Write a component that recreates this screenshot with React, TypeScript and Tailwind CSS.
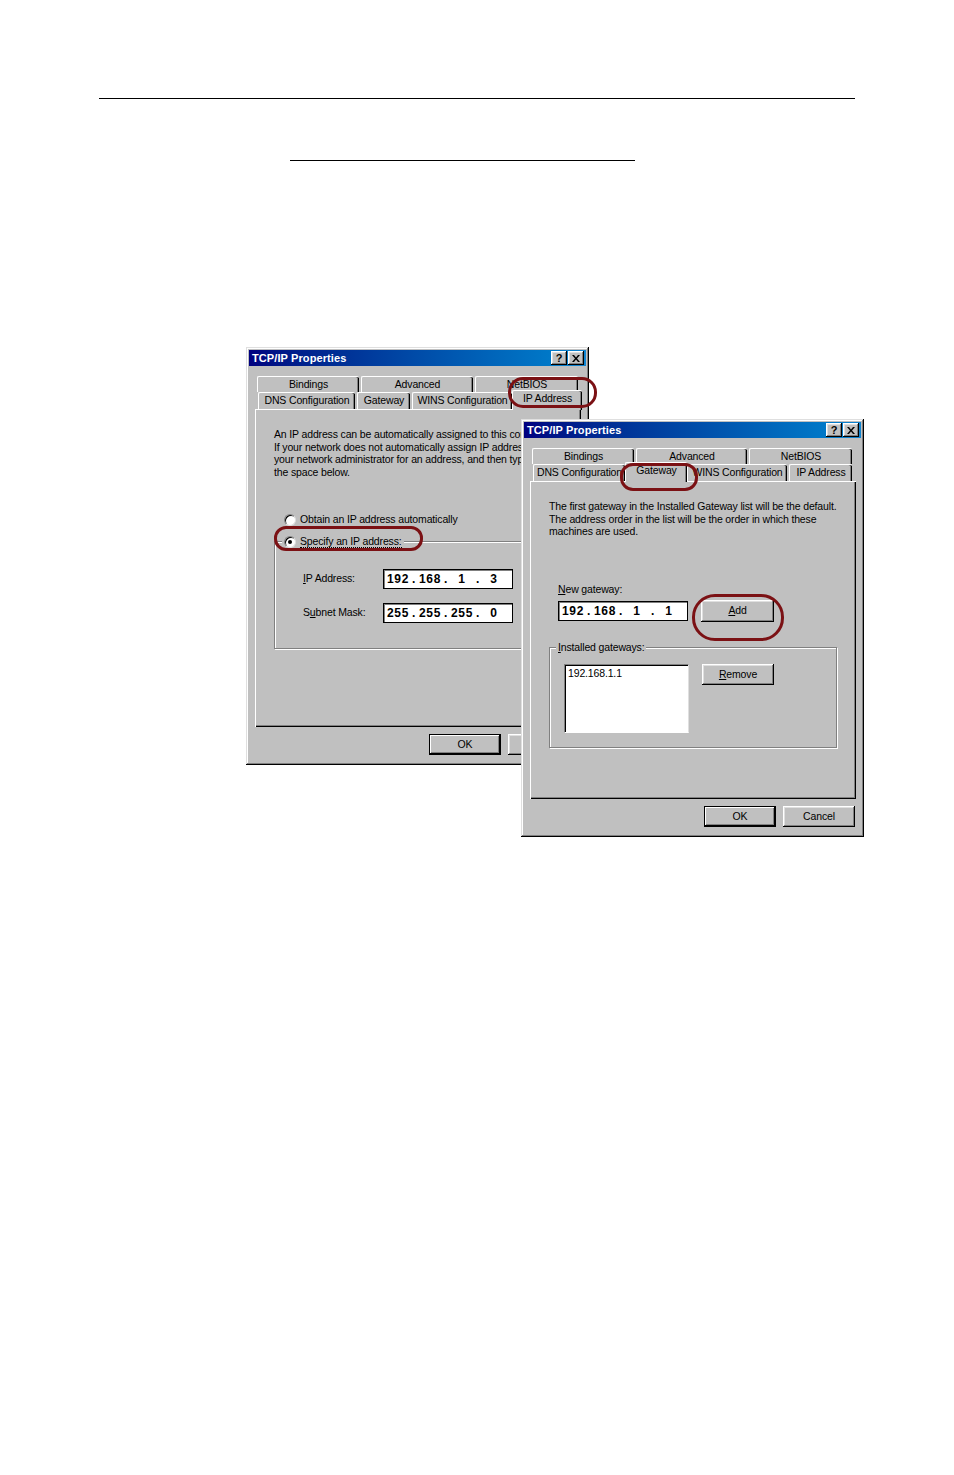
import React from 'react';

// win98 bevels
const raised = 'bg-[#c0c0c0] shadow-[inset_-1px_-1px_#000,inset_1px_1px_#fff,inset_-2px_-2px_#808080,inset_2px_2px_#dfdfdf]';
const winFrame = 'bg-[#c0c0c0] shadow-[inset_-1px_-1px_#000,inset_1px_1px_#dfdfdf,inset_-2px_-2px_#808080,inset_2px_2px_#fff]';
const ui = "font-['Liberation_Sans',Arial,sans-serif] text-[10.5px] tracking-[-0.15px] text-black";

interface TabDef {
  label: string;
  w: number;
  selected?: boolean;
}

const Tab: React.FC<TabDef & { h: string }> = ({ label, w, selected, h }) => {
  if (selected) {
    return (
      <div
        style={{ width: w + 4 }}
        className="relative z-10 -mx-[2px] -mb-px h-[20px] shrink-0 rounded-t-[2px] border-t border-l border-white bg-[#c0c0c0] pb-[3px] shadow-[inset_-1px_0_#000,inset_-2px_0_#808080] flex items-center justify-center whitespace-nowrap overflow-hidden"
      >
        {label}
      </div>
    );
  }
  return (
    <div
      style={{ width: w }}
      className={`${h} shrink-0 rounded-t-[2px] border-t border-l border-white bg-[#c0c0c0] shadow-[inset_-1px_0_#000,inset_-2px_0_#808080] flex items-center justify-center whitespace-nowrap overflow-hidden`}
    >
      {label}
    </div>
  );
};

const TitleBar = () => (
  <div className="h-[16px] flex items-center justify-between pl-[3px] pr-[2px] bg-linear-to-r from-[#000080] to-[#1084d0]">
    <span className="font-['Liberation_Sans',Arial,sans-serif] text-[11px] font-bold text-white tracking-[0.1px]">TCP/IP Properties</span>
    <div className="flex gap-[1px]">
      <div className={`${raised} w-[16px] h-[14px] flex items-center justify-center font-['Liberation_Sans',Arial,sans-serif] text-[11px] font-bold leading-none`}>?</div>
      <div className={`${raised} w-[16px] h-[14px] flex items-center justify-center`}>
        <svg width="8" height="7" viewBox="0 0 8 7">
          <path d="M0 0h2l2 2.5L6 0h2L5 3.5 8 7H6L4 4.5 2 7H0l3-3.5z" fill="#000" />
        </svg>
      </div>
    </div>
  </div>
);

const Button: React.FC<{ children: React.ReactNode; w: number; h?: number; isDefault?: boolean }> = ({ children, w, h = 21, isDefault }) => (
  <div
    style={{ width: w, height: h }}
    className={
      isDefault
        ? 'border border-black bg-[#c0c0c0] shadow-[inset_-1px_-1px_#000,inset_1px_1px_#fff,inset_-2px_-2px_#808080] flex items-center justify-center shrink-0'
        : `${raised} flex items-center justify-center shrink-0`
    }
  >
    {children}
  </div>
);

const IpField: React.FC<{ parts: string[] }> = ({ parts }) => (
  <div className="w-[130px] h-[20px] bg-white border border-black shadow-[inset_1px_1px_#808080] flex items-center pl-[3px] font-['Liberation_Sans',Arial,sans-serif] text-[12px] font-bold tracking-[0.6px]">
    {parts.map((p, i) => (
      <React.Fragment key={i}>
        <span className="w-[22px] text-center">{p}</span>
        {i < parts.length - 1 && <span className="w-[10px] text-center">.</span>}
      </React.Fragment>
    ))}
  </div>
);

const Radio: React.FC<{ checked?: boolean }> = ({ checked }) => (
  <span className="w-[12px] h-[12px] rounded-full bg-white border border-t-[#808080] border-l-[#808080] border-r-[#dfdfdf] border-b-[#dfdfdf] shadow-[inset_1px_1px_#000] flex items-center justify-center shrink-0">
    {checked && <span className="w-[4px] h-[4px] rounded-full bg-black" />}
  </span>
);

const Window: React.FC<{ className: string; row1: TabDef[]; row2: TabDef[]; children: React.ReactNode }> = ({ className, row1, row2, children }) => (
  <div className={`absolute w-[343px] h-[418px] p-[3px] ${winFrame} ${ui} ${className}`}>
    <TitleBar />
    <div className="mt-[10px] ml-[8px] flex gap-[2px]">
      {row1.map((t) => (
        <Tab key={t.label} {...t} h="h-[16px]" />
      ))}
    </div>
    <div className="ml-[9px] h-[17px] flex items-end gap-[2px]">
      {row2.map((t) => (
        <Tab key={t.label} {...t} h="h-[17px]" />
      ))}
    </div>
    <div className="ml-[6px] w-[326px] h-[318px] bg-[#c0c0c0] border-t border-l border-white shadow-[inset_-1px_-1px_#000,inset_-2px_-2px_#808080] overflow-hidden">
      {children}
    </div>
    <div className="mt-[7px] pr-[6px] flex justify-end gap-[7px]">
      <Button w={72} isDefault>OK</Button>
      <Button w={72}>Cancel</Button>
    </div>
  </div>
);

const Ring: React.FC<{ className: string }> = ({ className }) => (
  <div className={`absolute z-30 border-[3px] border-[#7b1114] ${className}`} />
);

export default function App() {
  return (
    <div className="relative w-[954px] h-[1475px] bg-white overflow-hidden">
      <div className="pt-[98px]">
        <div className="ml-[99px] w-[756px] h-px bg-black" />
        <div className="mt-[61px] ml-[290px] w-[345px] h-px bg-black" />
      </div>

      {/* back dialog: IP Address tab */}
      <Window
        className="left-[246px] top-[347px] z-10"
        row1={[
          { label: 'Bindings', w: 102 },
          { label: 'Advanced', w: 112 },
          { label: 'NetBIOS', w: 103 },
        ]}
        row2={[
          { label: 'DNS Configuration', w: 97 },
          { label: 'Gateway', w: 53 },
          { label: 'WINS Configuration', w: 100 },
          { label: 'IP Address', w: 66, selected: true },
        ]}
      >
        <div className="pl-[18px] pt-[18px]">
          <p className="leading-[12.7px] whitespace-nowrap">
            An IP address can be automatically assigned to this computer.
            <br />
            If your network does not automatically assign IP addresses, ask
            <br />
            your network administrator for an address, and then type it in
            <br />
            the space below.
          </p>
          <div className="mt-[34px] ml-[10px] h-[14px] flex items-center gap-[4px]">
            <Radio />
            <span>Obtain an IP address automatically</span>
          </div>
          <fieldset className="mt-[8px] w-[290px] border border-[#808080] shadow-[1px_1px_#fff,inset_1px_1px_#fff]">
            <legend className="ml-[7px] px-[2px] bg-[#c0c0c0]">
              <span className="h-[14px] flex items-center gap-[4px]">
                <Radio checked />
                <span className="border-b border-dotted border-black leading-[11px]">Specify an IP address:</span>
              </span>
            </legend>
            <div className="pl-[28px] pt-[20px] pb-[25px] flex flex-col gap-[14px]">
              <div className="flex items-center">
                <span className="w-[80px]">
                  <span className="underline">I</span>P Address:
                </span>
                <IpField parts={['192', '168', '1', '3']} />
              </div>
              <div className="flex items-center">
                <span className="w-[80px]">
                  S<span className="underline">u</span>bnet Mask:
                </span>
                <IpField parts={['255', '255', '255', '0']} />
              </div>
            </div>
          </fieldset>
        </div>
      </Window>

      {/* front dialog: Gateway tab */}
      <Window
        className="left-[521px] top-[419px] z-20"
        row1={[
          { label: 'Bindings', w: 102 },
          { label: 'Advanced', w: 111 },
          { label: 'NetBIOS', w: 103 },
        ]}
        row2={[
          { label: 'DNS Configuration', w: 92 },
          { label: 'Gateway', w: 58, selected: true },
          { label: 'WINS Configuration', w: 100 },
          { label: 'IP Address', w: 63 },
        ]}
      >
        <div className="pl-[18px] pt-[18px]">
          <p className="leading-[12.7px] whitespace-nowrap">
            The first gateway in the Installed Gateway list will be the default.
            <br />
            The address order in the list will be the order in which these
            <br />
            machines are used.
          </p>
          <div className="mt-[45px] ml-[9px] h-[14px] flex items-center">
            <span className="underline">N</span>ew gateway:
          </div>
          <div className="mt-[3px] ml-[9px] flex items-start gap-[13px]">
            <div className="mt-[1px]">
              <IpField parts={['192', '168', '1', '1']} />
            </div>
            <Button w={73} h={22}>
              <span>
                <span className="underline">A</span>dd
              </span>
            </Button>
          </div>
          <fieldset className="mt-[18px] w-[288px] border border-[#808080] shadow-[1px_1px_#fff,inset_1px_1px_#fff]">
            <legend className="ml-[6px] px-[2px] bg-[#c0c0c0] h-[14px] leading-[14px]">
              <span className="underline">I</span>nstalled gateways:
            </legend>
            <div className="pl-[14px] pt-[10px] pb-[14px] flex items-start gap-[13px]">
              <div className="w-[125px] h-[69px] bg-white border-t border-l border-[#808080] border-r border-b border-r-[#dfdfdf] border-b-white shadow-[inset_1px_1px_#000] pl-[3px] pt-[1px]">
                192.168.1.1
              </div>
              <Button w={72}>
                <span>
                  <span className="underline">R</span>emove
                </span>
              </Button>
            </div>
          </fieldset>
        </div>
      </Window>

      <Ring className="left-[508px] top-[377px] w-[89px] h-[31px] rounded-[15px]" />
      <Ring className="left-[274px] top-[526px] w-[149px] h-[25px] rounded-[12px]" />
      <Ring className="left-[620px] top-[463px] w-[78px] h-[28px] rounded-[13px]" />
      <Ring className="left-[692px] top-[594px] w-[92px] h-[47px] rounded-[23px]" />
    </div>
  );
}
